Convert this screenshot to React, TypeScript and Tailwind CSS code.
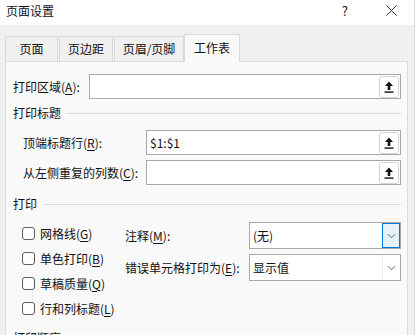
import React from "react";

const font = { fontFamily: '"Noto Sans CJK SC", "Liberation Sans", sans-serif' };

function Acc({ k }: { k: string }) {
  return (
    <>
      (<span className="underline underline-offset-2">{k}</span>)
    </>
  );
}

function PickIcon() {
  return (
    <svg viewBox="0 0 10 12" className="h-[12px] w-[10px]">
      <path d="M5 0.5 L9 5 H6.3 V9 H3.7 V5 H1 Z" fill="#111" />
      <rect x="0.5" y="10.4" width="9" height="1.4" fill="#111" />
    </svg>
  );
}

function RefInput({ value }: { value?: string }) {
  return (
    <div className="flex h-[25px] flex-1 items-center border border-[#a9a9a9] bg-white pl-[3px] pr-[1px]">
      <span className="flex-1 text-[12px] leading-none">{value}</span>
      <div className="flex h-[22px] w-[20px] items-center justify-center rounded-[3px] border border-[#d4d4d4] bg-white">
        <PickIcon />
      </div>
    </div>
  );
}

function Chevron() {
  return (
    <svg viewBox="0 0 10 6" className="h-[6px] w-[9px]">
      <path d="M1 1 L5 5 L9 1" fill="none" stroke="#555" strokeWidth="1" />
    </svg>
  );
}

function Select({ value, focused }: { value: string; focused?: boolean }) {
  return (
    <div className="flex h-[27px] w-[152px] items-stretch border border-[#a9a9a9] bg-white">
      <span className="flex flex-1 items-center pl-[3px] text-[12px] leading-none">{value}</span>
      {focused ? (
        <div className="flex w-[18px] items-center justify-center border border-[#0078d7] bg-[#e5f1fb]">
          <Chevron />
        </div>
      ) : (
        <div className="flex w-[18px] items-center justify-center border-l border-[#f0f0f0]">
          <Chevron />
        </div>
      )}
    </div>
  );
}

function Group({ title, lineMl }: { title: string; lineMl?: string }) {
  return (
    <div className="flex h-[14px] items-center">
      <span className="text-[12px] leading-none">{title}</span>
      <div className={`h-px flex-1 bg-[#dadada] ${lineMl ?? "ml-[5px]"}`} />
    </div>
  );
}

function Check({ label, k }: { label: string; k: string }) {
  return (
    <div className="flex h-[25px] items-center">
      <div className="h-[13px] w-[13px] rounded-[3px] border border-[#5c5c5c] bg-white" />
      <span className="ml-[5px] text-[12px] leading-none">
        {label}
        <Acc k={k} />
      </span>
    </div>
  );
}

export default function App() {
  const tabs = ["页面", "页边距", "页眉/页脚"];
  const widths = ["w-[53px]", "w-[54px]", "w-[70px]"];
  return (
    <div className="flex h-[335px] w-[417px] overflow-hidden text-[#111]" style={font}>
      <div className="flex w-[414px] flex-col overflow-hidden bg-[#f0f0f0]">
        {/* title bar */}
        <div className="flex h-[25px] shrink-0 items-center bg-white pb-[4px] pl-[6px] pr-[17px]">
          <span className="flex-1 text-[12px] leading-none">页面设置</span>
          <span className="mr-[38px] text-[13px] leading-none">?</span>
          <svg viewBox="0 0 12 12" className="h-[11px] w-[11px]">
            <path d="M0.5 0.5 L11.5 11.5 M11.5 0.5 L0.5 11.5" stroke="#222" strokeWidth="1" />
          </svg>
        </div>

        <div className="shrink-0 px-[5px] pt-[9px]">
          {/* tabs */}
          <div className="flex h-[27px] items-end">
            {tabs.map((t, i) => (
              <div
                key={t}
                className={`flex h-[25px] items-center justify-center border border-b-0 border-[#d9d9d9] bg-[#f0f0f0] text-[12px] leading-none ${widths[i]} ${i > 0 ? "ml-[1px]" : ""}`}
              >
                {t}
              </div>
            ))}
            <div className="relative z-10 -mb-px flex h-[28px] w-[56px] items-center justify-center border border-b-0 border-[#d9d9d9] bg-[#f9f9f9] pb-[1px] text-[12px] leading-none">
              工作表
            </div>
          </div>

          {/* panel */}
          <div className="h-[290px] w-[403px] overflow-hidden border border-[#dcdcdc] bg-[#f9f9f9] pl-[7px] pr-[6px] pt-[12px]">
            <div className="flex h-[25px] items-center">
              <span className="w-[76px] text-[12px] leading-none">
                打印区域<Acc k="A" />:
              </span>
              <RefInput />
            </div>

            <div className="mt-[7px]">
              <Group title="打印标题" />
            </div>

            <div className="mt-[10px] flex h-[25px] items-center">
              <span className="w-[133px] pl-[10px] text-[12px] leading-none">
                顶端标题行<Acc k="R" />:
              </span>
              <RefInput value="$1:$1" />
            </div>
            <div className="mt-[5px] flex h-[25px] items-center">
              <span className="w-[133px] pl-[10px] text-[12px] leading-none">
                从左侧重复的列数<Acc k="C" />:
              </span>
              <RefInput />
            </div>

            <div className="mt-[12px]">
              <Group title="打印" lineMl="ml-[6px]" />
            </div>

            <div className="flex">
              <div className="w-[112px] pl-[9px] pt-[10px]">
                <Check label="网格线" k="G" />
                <Check label="单色打印" k="B" />
                <Check label="草稿质量" k="Q" />
                <Check label="行和列标题" k="L" />
              </div>
              <div className="flex-1 pt-[11px]">
                <div className="flex items-center">
                  <span className="flex-1 text-[12px] leading-none">
                    注释<Acc k="M" />:
                  </span>
                  <Select value="(无)" focused />
                </div>
                <div className="mt-[5px] flex items-center">
                  <span className="flex-1 text-[12px] leading-none">
                    错误单元格打印为<Acc k="E" />:
                  </span>
                  <Select value="显示值" />
                </div>
              </div>
            </div>

            <div className="mt-[10px]">
              <Group title="打印顺序" />
            </div>
          </div>
        </div>
      </div>
      <div className="w-[3px] border-l border-[#d8d8d8] bg-white" />
    </div>
  );
}
